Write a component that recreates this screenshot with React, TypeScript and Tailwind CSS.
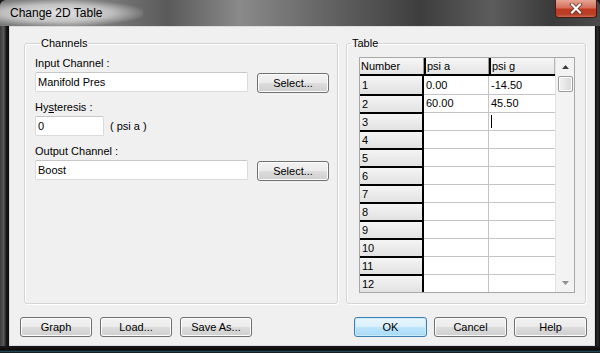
import React from "react";

const FONT = { fontFamily: '"Liberation Sans", Arial, sans-serif' };

function Btn({ label, ok = false, w = "w-[72px]", extra = "" }: { label: string; ok?: boolean; w?: string; extra?: string }) {
  return (
    <div
      className={
        "h-[20px] rounded-[3px] border flex items-center justify-center text-[11px] text-black leading-none " +
        w +
        " " +
        extra +
        " " +
        (ok
          ? "border-[#3c7fb1] bg-[linear-gradient(#eaf6fd_0%,#d9f0fc_50%,#bee6fd_50%,#a7d9f5_100%)] shadow-[inset_0_0_0_1px_#c8ecfd]"
          : "border-[#707070] bg-[linear-gradient(#f2f2f2_0%,#ebebeb_50%,#dddddd_50%,#cfcfcf_100%)] shadow-[inset_0_0_0_1px_#fcfcfc]")
      }
    >
      {label}
    </div>
  );
}

function TextBox({ value, w }: { value: string; w: string }) {
  return (
    <div className={"h-[20px] bg-white border border-[#dadada] border-t-[#c6c6c6] rounded-[2px] flex items-center pl-[2px] text-[11px] text-black " + w}>
      {value}
    </div>
  );
}

const rows: [string, string, string][] = [
  ["1", "0.00", "-14.50"],
  ["2", "60.00", "45.50"],
  ["3", "", ""],
  ["4", "", ""],
  ["5", "", ""],
  ["6", "", ""],
  ["7", "", ""],
  ["8", "", ""],
  ["9", "", ""],
  ["10", "", ""],
  ["11", "", ""],
  ["12", "", ""],
];

function Grid() {
  return (
    <div className="flex w-[216px] h-[236px] border border-[#a8a8a8] bg-white mt-[7px] ml-[12px]">
      <div className="flex flex-col w-[195px]">
        <div className="flex h-[18px] border-b-2 border-black text-[11px]">
          <div className="w-[64px] bg-[linear-gradient(#f7f7f7,#e4e4e4)] border-r border-[#9a9a9a] flex items-center pl-[1px]">Number</div>
          <div className="w-[65px] bg-[linear-gradient(#f7f7f7,#e4e4e4)] border-l-2 border-l-black border-r border-r-[#9a9a9a] flex items-center pl-[1px]">psi a</div>
          <div className="w-[66px] bg-[linear-gradient(#f7f7f7,#e4e4e4)] border-l-2 border-l-black border-r border-r-[#b8b8b8] flex items-center pl-[1px]">psi g</div>
        </div>
        {rows.map(([n, a, g], i) => (
          <div key={n} className="flex h-[18px] text-[11px]">
            <div
              className={
                "w-[64px] bg-[linear-gradient(#f4f4f4,#e2e2e2)] border-r-2 border-r-black flex items-center pl-[2px] " +
                (i > 0 ? "border-t-2 border-t-black" : "")
              }
            >
              {n}
            </div>
            <div className={"w-[65px] border-r border-r-[#c4c4c4] flex items-center pl-[2px] " + (i > 0 ? "border-t border-t-[#c4c4c4]" : "")}>
              {a}
            </div>
            <div className={"w-[66px] flex items-center pl-[2px] " + (i > 0 ? "border-t border-t-[#c4c4c4]" : "")}>
              {g}
              {i === 2 && <div className="w-[1px] h-[13px] bg-black" />}
            </div>
          </div>
        ))}
      </div>
      <div className="w-[19px] bg-[#f3f3f3] border-l border-[#e2e2e2] flex flex-col items-center">
        <div className="h-[18px] flex items-center justify-center">
          <svg width="7" height="4" viewBox="0 0 7 4">
            <path d="M0 4 L3.5 0 L7 4 Z" fill="#404040" />
          </svg>
        </div>
        <div className="w-[15px] h-[16px] rounded-[2px] border border-[#9a9a9a] bg-[linear-gradient(90deg,#f2f2f2,#d8d8d8)] shadow-[inset_0_0_0_1px_#ffffff]" />
        <div className="flex-1" />
        <div className="h-[18px] flex items-center justify-center">
          <svg width="7" height="4" viewBox="0 0 7 4">
            <path d="M0 0 L3.5 4 L7 0 Z" fill="#909090" />
          </svg>
        </div>
      </div>
    </div>
  );
}

export default function App() {
  return (
    <div style={FONT} className="w-[600px] h-[353px] flex flex-col bg-[#151515] overflow-hidden">
      {/* Title bar */}
      <div className="h-[26px] flex items-start bg-[linear-gradient(90deg,#7a7a7a_0%,#8c8c8c_12%,#5a5a5a_28%,#8a8a8a_40%,#6a6a6a_52%,#3e3e3e_70%,#5c5c5c_82%,#3a3a3a_92%,#4a4a4a_100%)] rounded-t-[6px]">
        <div className="h-[26px] flex items-center pl-[10px] pr-[40px] bg-[radial-gradient(ellipse_at_40%_50%,rgba(230,230,230,0.95)_0%,rgba(220,220,220,0.7)_45%,rgba(200,200,200,0)_75%)] text-[12px] text-black">
          Change 2D Table
        </div>
        <div className="flex-1" />
        <div className="w-[42px] h-[18px] mr-[3px] rounded-b-[4px] border border-t-0 border-[#4a1a12] bg-[linear-gradient(#e6a494_0%,#d5705c_45%,#c0391e_55%,#b8402a_85%,#d06a50_100%)] flex items-center justify-center">
          <svg width="14" height="11" viewBox="0 0 14 11">
            <path d="M3 1.5 L11 9.5 M11 1.5 L3 9.5" stroke="#5a2a22" strokeWidth="3.6" strokeLinecap="square" />
            <path d="M3 1.5 L11 9.5 M11 1.5 L3 9.5" stroke="#ffffff" strokeWidth="2.2" strokeLinecap="square" />
          </svg>
        </div>
      </div>

      <div className="flex h-[320px]">
        <div className="w-[9px] bg-[linear-gradient(90deg,#3a3a3a,#5a5a5a_40%,#1a1a1a_70%,#0a0a0a)]" />
        {/* Client area */}
        <div className="w-[586px] bg-[#f0f0f0] border border-[#dcdcdc] flex flex-col text-[11px] text-black">
          <div className="flex pt-[10px] pl-[14px]">
            <fieldset className="w-[314px] h-[267px] border border-[#d5d5d5] rounded-[3px] shadow-[inset_1px_1px_0_#ffffff,1px_1px_0_#ffffff] pl-[10px]">
              <legend className="ml-[5px] px-[1px] leading-[13px]">Channels</legend>
              <div className="mt-[7px] leading-[13px]">Input Channel :</div>
              <div className="mt-[2px] flex items-start">
                <TextBox value="Manifold Pres" w="w-[213px]" />
                <Btn label="Select..." w="w-[72px]" extra="ml-[9px] mt-[1px]" />
              </div>
              <div className="mt-[8px] leading-[13px]">
                Hy<span className="underline">s</span>teresis :
              </div>
              <div className="mt-[2px] flex items-center">
                <TextBox value="0" w="w-[69px]" />
                <span className="ml-[6px]">( psi a )</span>
              </div>
              <div className="mt-[9px] leading-[13px]">Output Channel :</div>
              <div className="mt-[2px] flex items-start">
                <TextBox value="Boost" w="w-[213px]" />
                <Btn label="Select..." w="w-[72px]" extra="ml-[9px] mt-[1px]" />
              </div>
            </fieldset>
            <fieldset className="ml-[8px] w-[240px] h-[267px] border border-[#d5d5d5] rounded-[3px] shadow-[inset_1px_1px_0_#ffffff,1px_1px_0_#ffffff]">
              <legend className="ml-[4px] px-[1px] leading-[13px]">Table</legend>
              <Grid />
            </fieldset>
          </div>
          <div className="flex mt-[13px] pl-[10px] pr-[7px]">
            <div className="flex gap-[8px]">
              <Btn label="Graph" w="w-[72px]" />
              <Btn label="Load..." w="w-[72px]" />
              <Btn label="Save As..." w="w-[72px]" />
            </div>
            <div className="flex-1" />
            <div className="flex gap-[7px]">
              <Btn label="OK" ok w="w-[73px]" />
              <Btn label="Cancel" w="w-[73px]" />
              <Btn label="Help" w="w-[73px]" />
            </div>
          </div>
        </div>
        <div className="w-[5px] bg-[linear-gradient(90deg,#0a0a0a,#2a2a2a,#101010)]" />
      </div>
      <div className="h-[7px] bg-[linear-gradient(#1a1a1a_0%,#0a0a0a_60%,#2a5060_75%,#0a0a0a_100%)]" />
    </div>
  );
}
